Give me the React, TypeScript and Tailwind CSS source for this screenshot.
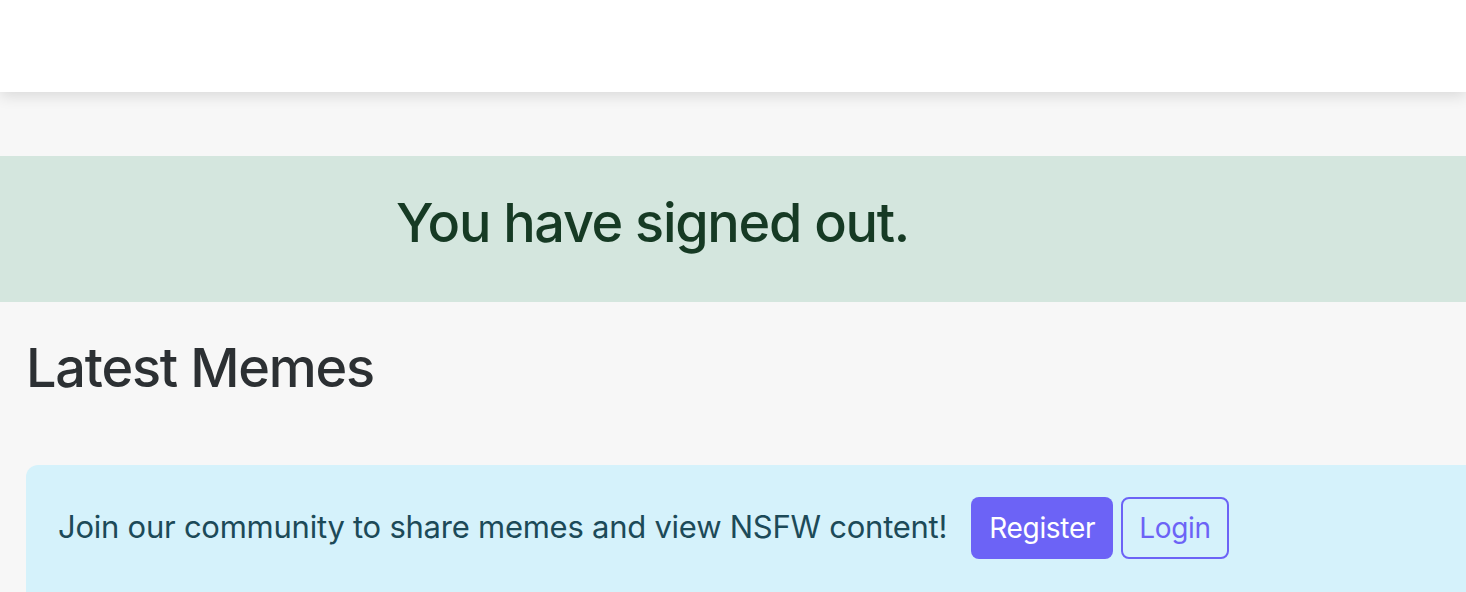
const App = () => {
  return (
    <div className="min-h-[592px] bg-[#f7f7f7] font-['Inter',sans-serif] overflow-hidden">
      <header className="h-[92px] bg-white shadow-[0_4px_14px_rgba(0,0,0,0.12)] relative z-10" />
      <div className="mt-[64px] h-[146px] bg-[#d4e6de] flex items-center pl-[396px] pb-[12px]">
        <p className="text-[54px] leading-none text-[#163a24] font-medium tracking-[-1.3px]">You have signed out.</p>
      </div>
      <main className="px-[26px]">
        <h2 className="mt-[34px] text-[54px] leading-[1.2] text-[#2c3033] font-medium tracking-[-1.2px]">Latest Memes</h2>
        <div className="mt-[64px] -mr-[60px] h-[160px] bg-[#d5f2fb] rounded-[12px] pl-[32px] pt-[32px] flex items-start">
          <span className="text-[31px] leading-[60px] text-[#1c4a58] tracking-[-0.25px] mr-[24px]">
            Join our community to share memes and view NSFW content!
          </span>
          <button className="h-[62px] px-[18px] bg-[#6c63f6] text-white text-[28px] tracking-[-0.3px] rounded-[8px] mr-[8px]">
            Register
          </button>
          <button className="h-[62px] px-[16px] border-2 border-[#6c63f6] text-[#6c63f6] text-[28px] tracking-[-0.3px] rounded-[8px]">
            Login
          </button>
        </div>
      </main>
    </div>
  );
};

export default App;
